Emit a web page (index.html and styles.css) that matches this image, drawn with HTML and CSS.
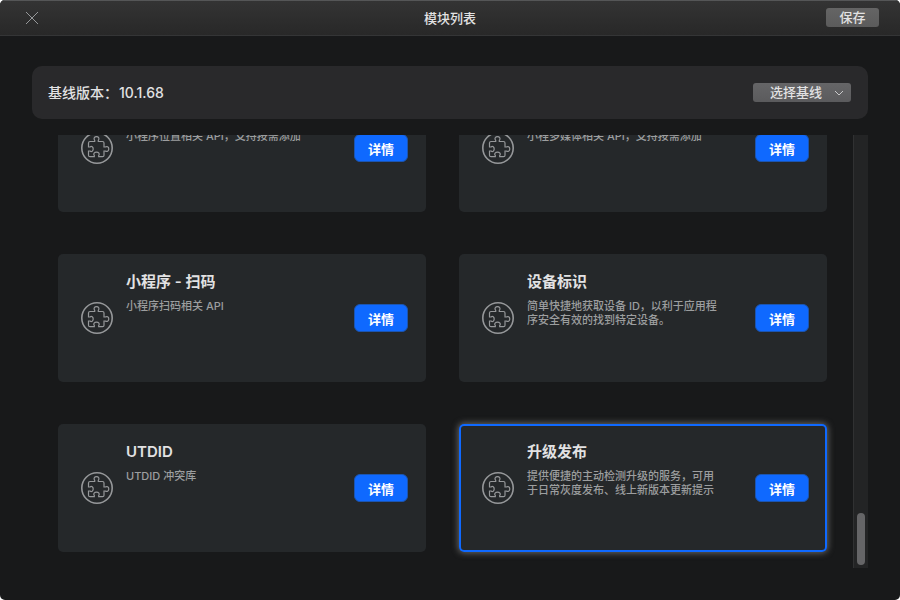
FILE: index.html
```
<!DOCTYPE html>
<html lang="zh-CN">
<head>
<meta charset="utf-8">
<title>模块列表</title>
<link rel="stylesheet" href="styles.css">
</head>
<body>
<svg class="defs" aria-hidden="true">
  <symbol id="puzzle" viewBox="0 0 32 32">
    <circle cx="16" cy="16" r="15.2" stroke-width="1.6"/>
    <path d="M9 9.5H13.7V8.4C12.2 6.3 13.5 4.7 15.5 4.7S18.8 6.3 17.3 8.4V9.5H21.5Q23 9.5 23 11V15H24.3C26 13.9 27.8 15 27.8 17S26 20.1 24.3 19H23V23.2Q23 24.7 21.5 24.7H17.7V23.4C19.1 21.8 17.6 20.2 15.5 20.2S11.9 21.8 13.3 23.4V24.7H9Q7.5 24.7 7.5 23.2V19H9C10.7 20.3 12.2 19 12.2 17S10.7 13.7 9 15H7.5V11Q7.5 9.5 9 9.5Z" stroke-width="1.2"/>
  </symbol>
</svg>
<div class="window">
  <header class="titlebar">
    <button class="close" type="button" aria-label="关闭">
      <svg viewBox="0 0 14 14"><path d="M1 1L13 13M13 1L1 13"/></svg>
    </button>
    <h1>模块列表</h1>
    <button class="save" type="button">保存</button>
  </header>
  <main class="content">
    <section class="baseline">
      <label for="baseline">基线版本：<span class="version">10.1.68</span></label>
      <div class="picker">
        <select id="baseline"><option>选择基线</option></select>
        <svg viewBox="0 0 10 6"><path d="M1 1L5 5L9 1"/></svg>
      </div>
    </section>
    <section class="modules">
      <div class="viewport">
        <div class="grid">
          <article class="card">
            <svg class="icon"><use href="#puzzle"/></svg>
            <div class="text"><h2></h2><p>小程序位置相关 API，支持按需添加</p></div>
            <button class="detail" type="button">详情</button>
          </article>
          <article class="card">
            <svg class="icon"><use href="#puzzle"/></svg>
            <div class="text"><h2></h2><p>小程多媒体相关 API，支持按需添加</p></div>
            <button class="detail" type="button">详情</button>
          </article>
          <article class="card">
            <svg class="icon"><use href="#puzzle"/></svg>
            <div class="text"><h2>小程序 - 扫码</h2><p>小程序扫码相关 API</p></div>
            <button class="detail" type="button">详情</button>
          </article>
          <article class="card">
            <svg class="icon"><use href="#puzzle"/></svg>
            <div class="text"><h2>设备标识</h2><p>简单快捷地获取设备 ID，以利于应用程序安全有效的找到特定设备。</p></div>
            <button class="detail" type="button">详情</button>
          </article>
          <article class="card">
            <svg class="icon"><use href="#puzzle"/></svg>
            <div class="text"><h2>UTDID</h2><p>UTDID 冲突库</p></div>
            <button class="detail" type="button">详情</button>
          </article>
          <article class="card selected">
            <svg class="icon"><use href="#puzzle"/></svg>
            <div class="text"><h2>升级发布</h2><p>提供便捷的主动检测升级的服务，可用于日常灰度发布、线上新版本更新提示</p></div>
            <button class="detail" type="button">详情</button>
          </article>
        </div>
      </div>
      <div class="scrollbar"><div class="thumb"></div></div>
    </section>
  </main>
</div>
</body>
</html>
```
FILE: styles.css
```
* {
  box-sizing: border-box;
}

body {
  margin: 0;
  background: #fff;
  color: #e2e2e3;
  font-family: Inter, "Noto Sans CJK SC", sans-serif;
  font-size: 13px;
}

h1, h2, p {
  margin: 0;
}

button, select {
  border: 0;
  padding: 0;
  color: inherit;
  font: inherit;
}

svg {
  display: block;
  fill: none;
  stroke: #96989a;
}

.defs {
  display: none;
}

.window {
  display: flex;
  flex-direction: column;
  height: 100vh;
  overflow: hidden;
  border-radius: 5px;
  background: #18191a;
}

.titlebar {
  display: grid;
  grid-template-columns: 1fr auto 1fr;
  align-items: center;
  height: 36px;
  padding: 0 21px;
  border-bottom: 1px solid #343536;
  background: linear-gradient(#343434, #282828);
  box-shadow: inset 0 1px #555657;
}

.titlebar h1 {
  font-size: 13px;
  font-weight: 500;
}

.close {
  justify-self: start;
  padding: 0 4px;
  background: none;
}

.close svg {
  width: 14px;
  height: 14px;
}

.save {
  justify-self: end;
  width: 53px;
  height: 19px;
  border-radius: 3px;
  background: linear-gradient(#656565, #5b5b5b);
  font-weight: 500;
  line-height: 19px;
}

.content {
  display: flex;
  flex: 1;
  flex-direction: column;
  gap: 16px;
  min-height: 0;
  padding: 30px 32px 32px;
}

.baseline {
  display: flex;
  align-items: center;
  justify-content: space-between;
  padding: 16px;
  border-radius: 10px;
  background: #29292b;
  font-size: 14px;
  font-weight: 500;
  line-height: 21px;
}

.version {
  margin-left: 1px;
}

.picker {
  position: relative;
  width: 98px;
  margin-right: 1px;
  font-size: 13px;
}

.picker select {
  display: block;
  width: 100%;
  height: 19px;
  padding: 0 17px;
  border-radius: 3px;
  appearance: none;
  background: linear-gradient(#656567, #5b5b5d);
  line-height: 19px;
}

.picker svg {
  position: absolute;
  top: 7px;
  right: 7px;
  width: 10px;
  height: 6px;
  stroke: #c8c8c9;
  pointer-events: none;
}

.modules {
  display: flex;
  flex: 1;
  min-height: 0;
}

.viewport {
  display: flex;
  flex: 1;
  flex-direction: column;
  justify-content: flex-end;
  overflow: hidden;
  padding: 0 26px 16px;
}

.grid {
  display: grid;
  grid-template-columns: 1fr 1fr;
  gap: 42px 33px;
}

.card {
  display: grid;
  grid-template-columns: 32px 1fr 54px;
  gap: 13px;
  align-items: center;
  height: 128px;
  padding: 0 18px 0 23px;
  border-radius: 5px;
  background: #25282a;
}

.selected {
  box-shadow: inset 0 0 0 2px #0f69ff, 0 0 6px 1px #666;
}

.icon {
  width: 32px;
  height: 32px;
}

.text {
  align-self: start;
  max-width: 195px;
  padding-top: 17px;
}

.text h2 {
  min-height: 22px;
  font-size: 15px;
  font-weight: 600;
  line-height: 22px;
}

.text p {
  margin-top: 6px;
  color: #9c9e9f;
  font-size: 11px;
  font-weight: 500;
  line-height: 14px;
}

.detail {
  height: 28px;
  border: 1px solid #1c55b0;
  border-radius: 6px;
  background: #0f69ff;
  color: #fff;
  font-weight: 600;
}

.scrollbar {
  display: flex;
  align-items: flex-end;
  justify-content: center;
  width: 15px;
  padding-bottom: 3px;
  border-left: 1px solid #303132;
  background: #232425;
}

.thumb {
  width: 8px;
  height: 52px;
  border-radius: 4px;
  background: #656567;
}
```
